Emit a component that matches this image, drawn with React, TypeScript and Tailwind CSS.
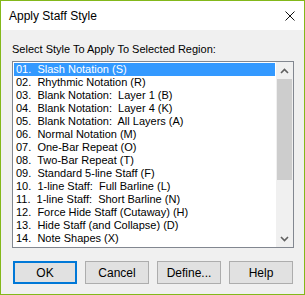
const items = [
  '01.  Slash Notation (S)',
  '02.  Rhythmic Notation (R)',
  '03.  Blank Notation:  Layer 1 (B)',
  '04.  Blank Notation:  Layer 4 (K)',
  '05.  Blank Notation:  All Layers (A)',
  '06.  Normal Notation (M)',
  '07.  One-Bar Repeat (O)',
  '08.  Two-Bar Repeat (T)',
  '09.  Standard 5-line Staff (F)',
  '10.  1-line Staff:  Full Barline (L)',
  '11.  1-line Staff:  Short Barline (N)',
  '12.  Force Hide Staff (Cutaway) (H)',
  '13.  Hide Staff (and Collapse) (D)',
  '14.  Note Shapes (X)',
  '15.  Tablature (Default) (G)',
]

const Chevron = ({ up }: { up?: boolean }) => (
  <svg width="9" height="6" viewBox="0 0 9 6">
    <path
      d={up ? 'M1 5 L4.5 1.5 L8 5' : 'M1 1 L4.5 4.5 L8 1'}
      fill="none"
      stroke="#606060"
      strokeWidth="1.6"
    />
  </svg>
)

export default function App() {
  return (
    <div className="w-[305px] h-[295px] border border-[#83b81a] bg-[#f0f0f0] flex flex-col font-['Liberation_Sans',Arial,sans-serif] text-black">
      <div className="h-[29px] bg-white flex items-center justify-between pl-[8px] pr-[9px]">
        <span className="text-[12px]">Apply Staff Style</span>
        <svg width="10" height="10" viewBox="0 0 10 10">
          <path d="M0.5 0.5 L9.5 9.5 M9.5 0.5 L0.5 9.5" stroke="#111" strokeWidth="1" />
        </svg>
      </div>
      <div className="flex flex-col pl-[11px] text-[11px]">
        <div className="mt-[12px] h-[14px] leading-[14px]">Select Style To Apply To Selected Region:</div>
        <div className="mt-[5px] w-[282px] h-[187px] border border-[#828790] bg-white flex">
          <div className="flex-1 overflow-hidden p-[1px]">
            {items.map((t, i) => (
              <div
                key={t}
                className={
                  i === 0
                    ? 'h-[13px] leading-[13px] pl-[2px] whitespace-pre bg-[#3399ff] text-white'
                    : 'h-[13px] leading-[13px] pl-[2px] whitespace-pre'
                }
              >
                {t}
              </div>
            ))}
          </div>
          <div className="w-[17px] bg-[#f0f0f0] flex flex-col">
            <div className="h-[17px] flex items-center justify-center">
              <Chevron up />
            </div>
            <div className="mx-[1px] h-[101px] bg-[#cdcdcd]" />
            <div className="flex-1" />
            <div className="h-[17px] flex items-center justify-center">
              <Chevron />
            </div>
          </div>
        </div>
        <div className="mt-[13px] ml-[1px] flex gap-[8px] text-[12px]">
          <button className="w-[64px] h-[23px] bg-[#e1e1e1] border-2 border-[#0078d7]">OK</button>
          <button className="w-[64px] h-[23px] bg-[#e1e1e1] border border-[#adadad]">Cancel</button>
          <button className="w-[64px] h-[23px] bg-[#e1e1e1] border border-[#adadad]">Define...</button>
          <button className="w-[64px] h-[23px] bg-[#e1e1e1] border border-[#adadad]">Help</button>
        </div>
      </div>
    </div>
  )
}
